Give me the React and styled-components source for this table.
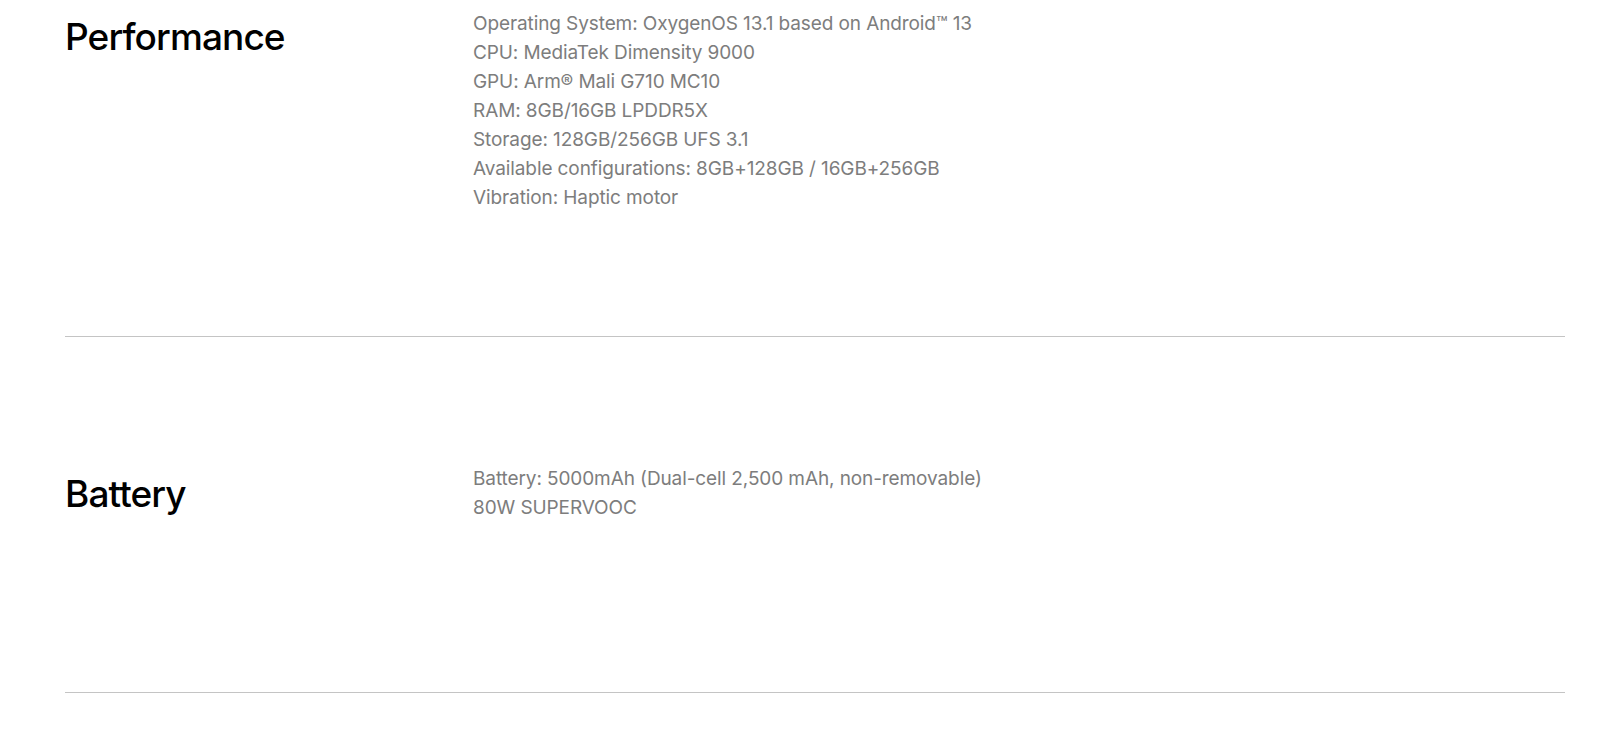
import React from 'react'
import styled, { createGlobalStyle } from 'styled-components'

const GlobalStyle = createGlobalStyle`
  body {
    margin: 0;
    background: #fff;
    font-family: Inter, "Liberation Sans", sans-serif;
  }
`

const Page = styled.div`
  padding: 0 43px 0 65px;
`

const Section = styled.section`
  display: grid;
  grid-template-columns: 408px 1fr;
  align-items: start;
  box-sizing: border-box;
  min-height: ${({ $minHeight }) => $minHeight || 0}px;
  padding: ${({ $top }) => $top}px 0 124px;
  border-bottom: 1px solid #c4c4c4;
`

const Heading = styled.h2`
  margin: ${({ $offset }) => $offset}px 0 0;
  font-size: 37px;
  line-height: 44px;
  font-weight: 500;
  letter-spacing: -0.9px;
  color: #000;
`

const SpecList = styled.ul`
  margin: 0;
  padding: 0;
  list-style: none;
`

const SpecItem = styled.li`
  font-size: 19px;
  line-height: 29px;
  letter-spacing: -0.1px;
  color: #7d7d7d;
`

const specs = [
  {
    title: 'Performance',
    top: 9,
    offset: 6,
    items: [
      'Operating System: OxygenOS 13.1 based on Android™ 13',
      'CPU: MediaTek Dimensity 9000',
      'GPU: Arm® Mali G710 MC10',
      'RAM: 8GB/16GB LPDDR5X',
      'Storage: 128GB/256GB UFS 3.1',
      'Available configurations: 8GB+128GB / 16GB+256GB',
      'Vibration: Haptic motor',
    ],
  },
  {
    title: 'Battery',
    top: 127,
    offset: 8,
    minHeight: 356,
    items: [
      'Battery: 5000mAh (Dual-cell 2,500 mAh, non-removable)',
      '80W SUPERVOOC',
    ],
  },
]

function App() {
  return (
    <>
      <GlobalStyle />
      <Page>
        {specs.map(spec => (
          <Section key={spec.title} $top={spec.top} $minHeight={spec.minHeight}>
            <Heading $offset={spec.offset}>{spec.title}</Heading>
            <SpecList>
              {spec.items.map(item => (
                <SpecItem key={item}>{item}</SpecItem>
              ))}
            </SpecList>
          </Section>
        ))}
      </Page>
    </>
  )
}

export default App
